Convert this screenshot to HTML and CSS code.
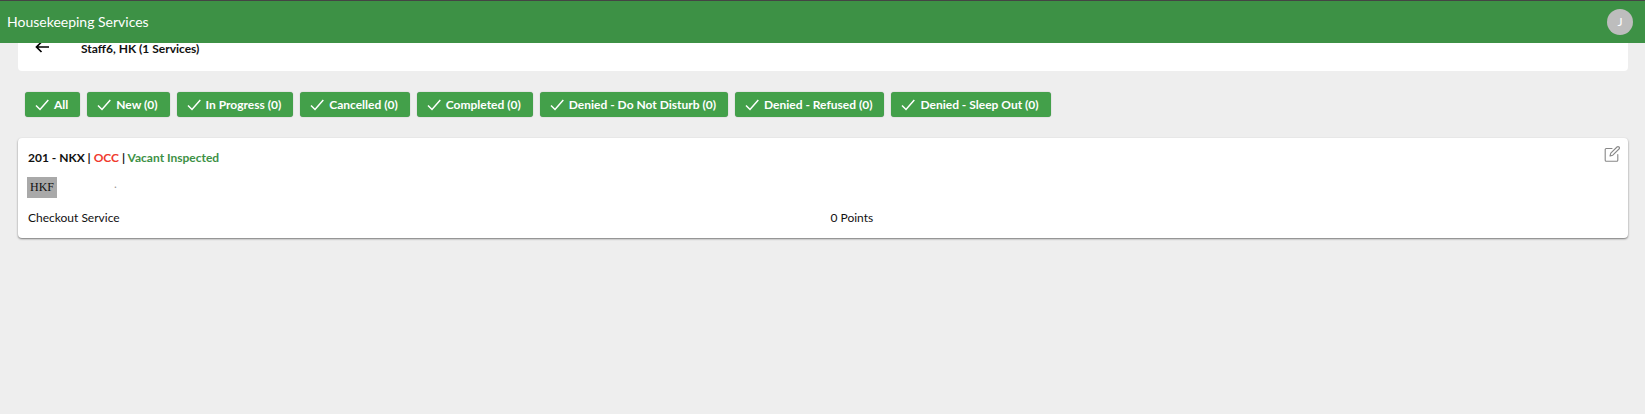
FILE: index.html
```html
<!DOCTYPE html>
<html lang="en">
<head>
    <meta charset="UTF-8">
    <meta name="viewport" content="width=device-width, initial-scale=1.0">
    <title>Housekeeping Services</title>
    <link rel="stylesheet" href="styles.css">
</head>
<body>
    <svg class="sprite" aria-hidden="true">
        <symbol id="check" viewBox="0 0 14 12">
            <path d="M1 6.5l4 4L13.3 1" fill="none" stroke="currentColor" stroke-width="1.5"/>
        </symbol>
    </svg>

    <header class="topbar">
        <h1 class="topbar-title">Housekeeping Services</h1>
        <button class="avatar" type="button" aria-label="Account">J</button>
    </header>

    <main class="content">
        <section class="staff-bar">
            <button class="icon-btn" type="button" aria-label="Back">
                <svg width="14" height="12" viewBox="0 0 14 12">
                    <path d="M14 6H1.5M6.5 1L1.5 6l5 5" fill="none" stroke="currentColor" stroke-width="1.7"/>
                </svg>
            </button>
            <h2 class="staff-name">Staff6, HK (1 Services)</h2>
        </section>

        <nav class="filters" aria-label="Service status">
            <button class="filter" type="button"><svg class="check"><use href="#check"/></svg>All</button>
            <button class="filter" type="button"><svg class="check"><use href="#check"/></svg>New (0)</button>
            <button class="filter" type="button"><svg class="check"><use href="#check"/></svg>In Progress (0)</button>
            <button class="filter" type="button"><svg class="check"><use href="#check"/></svg>Cancelled (0)</button>
            <button class="filter" type="button"><svg class="check"><use href="#check"/></svg>Completed (0)</button>
            <button class="filter" type="button"><svg class="check"><use href="#check"/></svg>Denied - Do Not Disturb (0)</button>
            <button class="filter" type="button"><svg class="check"><use href="#check"/></svg>Denied - Refused (0)</button>
            <button class="filter" type="button"><svg class="check"><use href="#check"/></svg>Denied - Sleep Out (0)</button>
        </nav>

        <article class="room-card">
            <div class="room-head">
                <h3 class="room-title">201 - NKX | <span class="occupied">OCC</span> | <span class="vacant">Vacant Inspected</span></h3>
                <button class="icon-btn edit" type="button" aria-label="Edit">
                    <svg width="16" height="16" viewBox="0 0 16 16" fill="none" stroke="currentColor" stroke-width="1.1" stroke-linejoin="round" stroke-linecap="round">
                        <path d="M8 2.500H2.200a1 1 0 0 0-1 1v10.800a1 1 0 0 0 1 1h10.600a1 1 0 0 0 1-1V8.600"/>
                        <path d="M6 10l.8-2.800L13 1a1.300 1.300 0 0 1 2 2L8.800 9.200z"/>
                    </svg>
                </button>
            </div>
            <div class="room-tags">
                <span class="tag">HKF</span>
                <span class="dot">.</span>
            </div>
            <div class="room-service">
                <span>Checkout Service</span>
                <span>0 Points</span>
            </div>
        </article>
    </main>
</body>
</html>
```

FILE: styles.css
```css
* {
    margin: 0;
    padding: 0;
    box-sizing: border-box;
}

body {
    font-family: Lato, "Liberation Sans", sans-serif;
    font-size: 12px;
    line-height: 20px;
    color: #111;
    background: #eee;
    min-height: 100vh;
}

button {
    font: inherit;
    border: none;
    cursor: pointer;
}

svg {
    display: block;
}

.sprite {
    display: none;
}

.topbar {
    position: sticky;
    top: 0;
    z-index: 10;
    display: flex;
    align-items: center;
    justify-content: space-between;
    height: 43px;
    padding: 0 12px 0 7px;
    background: #3d9145;
    border-top: 1px solid #444;
    color: #fff;
}

.topbar-title {
    font-size: 14px;
    font-weight: 400;
}

.avatar {
    width: 26px;
    height: 26px;
    border-radius: 50%;
    background: #bdbdbd;
    color: #fff;
}

.content {
    padding: 0 17px 0 18px;
}

/* scrolled partly under the top bar */
.staff-bar {
    display: flex;
    align-items: center;
    height: 44px;
    margin-top: -16px;
    padding: 0 17px 4px;
    background: #fff;
    border-radius: 4px;
}

.icon-btn {
    background: none;
    color: #000;
}

.staff-name {
    margin-left: 32px;
    padding-top: 4px;
    font-size: 12px;
    font-weight: 700;
}

.filters {
    display: flex;
    flex-wrap: wrap;
    gap: 7px;
    padding: 21px 7px;
}

.filter {
    display: flex;
    align-items: center;
    height: 25px;
    padding: 1px 12px 0 10px;
    background: #43a04a;
    border-radius: 3px;
    box-shadow: 0 0 1px rgba(0, 0, 0, 0.4);
    color: #fff;
    font-weight: 700;
    white-space: nowrap;
}

.check {
    width: 14px;
    height: 12px;
    margin-right: 5px;
}

.room-card {
    padding: 10px;
    background: #fff;
    border-radius: 4px;
    box-shadow: 0 1px 2px rgba(0, 0, 0, 0.5);
}

.room-head {
    display: flex;
    align-items: flex-start;
    justify-content: space-between;
}

.room-title {
    font-size: 12px;
    font-weight: 700;
}

.occupied {
    color: #f03a2e;
}

.vacant {
    color: #3d9145;
}

.edit {
    margin: -2px -2px 0 0;
    color: #888;
}

.room-tags {
    display: flex;
    align-items: flex-start;
    margin: 9px 0 10px -1px;
}

.tag {
    padding: 0 3px;
    background: #a9a9a9;
    font-family: "Liberation Serif", serif;
    line-height: 21px;
}

.dot {
    margin-left: 57px;
    color: #999;
    line-height: 14px;
}

.room-service {
    display: grid;
    grid-template-columns: 1fr 1fr;
    column-gap: 15px;
}
```
